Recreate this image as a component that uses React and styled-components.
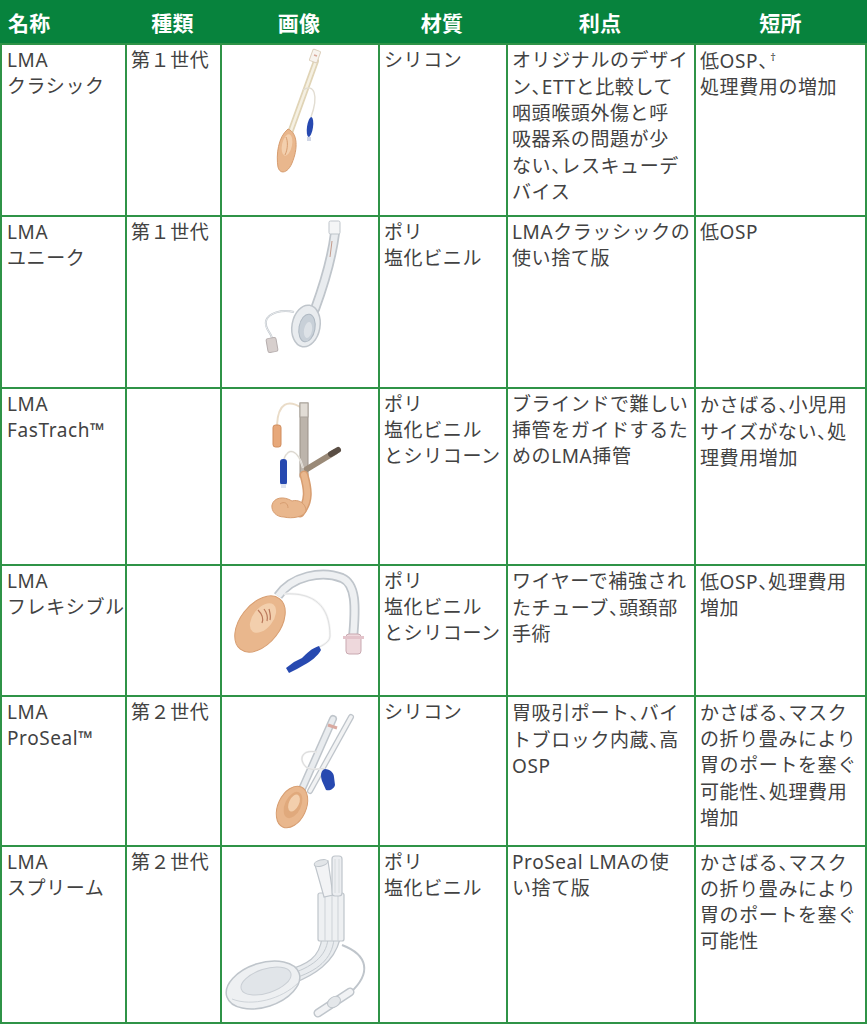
import React from 'react';
import styled, { createGlobalStyle } from 'styled-components';

const GlobalStyle = createGlobalStyle`
  html, body {
    margin: 0;
    padding: 0;
    background: #fff;
  }
  body {
    font-family: "Noto Sans", "Noto Sans CJK JP", sans-serif;
  }
`;

const COLS = [125, 95, 158, 128, 188, 173];

const Page = styled.div`
  width: 867px;
`;

const HeaderRow = styled.div`
  display: grid;
  grid-template-columns: ${COLS.map((c) => c + 'px').join(' ')};
  height: 43px;
  background: #07833d;
`;

const HeaderCell = styled.div`
  display: flex;
  align-items: center;
  justify-content: ${({ left }) => (left ? 'flex-start' : 'center')};
  padding-left: ${({ left }) => (left ? '8px' : '0')};
  color: #fff;
  font-family: "Noto Sans CJK JP", sans-serif;
  font-weight: 700;
  font-size: 21px;
  letter-spacing: 0.3px;
`;

const Body = styled.div`
  display: grid;
  grid-template-columns: 123px 93px 156px 126px 186px 169px;
  grid-template-rows: 170px 170px 175px 129px 148px 175px;
  gap: 2px;
  padding: 2px;
  background: #2f9347;
`;

const Cell = styled.div`
  background: #fff;
  padding: 2px 4px 0 ${({ first }) => (first ? '5px' : '4px')};
  font-size: 19px;
  line-height: 26px;
  letter-spacing: 0.6px;
  color: #424242;
  white-space: nowrap;
  overflow: hidden;
`;

const ImageCell = styled.div`
  background: #fff;
  overflow: hidden;
  svg {
    display: block;
  }
`;

const Comma = styled.span`
  font-family: "Noto Sans CJK JP", sans-serif;
  font-feature-settings: "halt";
`;

const Sup = styled.sup`
  font-size: 11px;
  line-height: 0;
  vertical-align: 7px;
  margin-left: 2px;
`;

const renderLine = (line) => {
  if (typeof line !== 'string') return line;
  const parts = line.split('、');
  return parts.map((p, i) => (
    <React.Fragment key={i}>
      {p}
      {i < parts.length - 1 && <Comma>、</Comma>}
    </React.Fragment>
  ));
};

const Lines = ({ lines }) =>
  lines.map((l, i) => (
    <React.Fragment key={i}>
      {renderLine(l)}
      {i < lines.length - 1 && <br />}
    </React.Fragment>
  ));

/* ---- device drawings ---- */

const PEACH = '#e9b78d';
const PEACH_EDGE = '#d79d70';
const PEACH_IN = '#f3cfad';
const BLUE = '#2749b0';
const CLEAR = '#e9ecef';
const CLEAR_EDGE = '#bfc5cb';

const Classic = () => (
  <svg width="156" height="170" viewBox="0 0 156 170">
    <path d="M94 16 L68 88" stroke="#e0d4b6" strokeWidth="6" strokeLinecap="round" />
    <path d="M94 16 L68 88" stroke="#f5f0e2" strokeWidth="2.5" strokeLinecap="round" />
    <rect x="89" y="5" width="8" height="12" rx="1" fill="#f7f3ee" stroke="#dccfbb" transform="rotate(20 93 11)" />
    <path d="M92 10 L95 11" stroke="#d9a89a" strokeWidth="1.5" />
    <path d="M81 45 C92 38, 97 50, 89 72" stroke="#e2ddd2" strokeWidth="1.4" fill="none" />
    <ellipse cx="88" cy="82" rx="3" ry="10" fill={BLUE} transform="rotate(8 88 82)" />
    <rect x="85" y="92" width="4" height="4" fill="#d0d6e6" />
    <path d="M66 84 C76 88, 76 104, 70 118 C66 128, 58 130, 56 122 C54 110, 56 92, 66 84 Z" fill={PEACH} stroke={PEACH_EDGE} strokeWidth="1" />
    <ellipse cx="65" cy="100" rx="5" ry="11" fill={PEACH_IN} transform="rotate(12 65 100)" />
    <path d="M64 92 C66 96, 66 104, 63 110" stroke={PEACH_EDGE} strokeWidth="1" fill="none" />
  </svg>
);

const Unique = () => (
  <svg width="156" height="170" viewBox="0 0 156 170">
    <path d="M113 16 C110 40, 104 62, 93 92" stroke={CLEAR_EDGE} strokeWidth="10" fill="none" strokeLinecap="round" />
    <path d="M113 16 C110 40, 104 62, 93 92" stroke={CLEAR} strokeWidth="6.5" fill="none" strokeLinecap="round" />
    <path d="M110 24 L108 40" stroke="#c49a8a" strokeWidth="1" />
    <rect x="107" y="4" width="11" height="13" rx="1.5" fill="#f4f5f6" stroke={CLEAR_EDGE} />
    <path d="M72 95 C60 92, 46 96, 44 104 C42 112, 50 116, 50 122" stroke={CLEAR_EDGE} strokeWidth="2" fill="none" />
    <path d="M72 95 C60 92, 46 96, 44 104 C42 112, 50 116, 50 122" stroke="#f3f4f5" strokeWidth="0.8" fill="none" />
    <rect x="45" y="121" width="10" height="14" rx="2" fill="#d7cfcd" stroke="#b6aeae" transform="rotate(-10 50 128)" />
    <ellipse cx="84" cy="109" rx="14" ry="21" fill={CLEAR} stroke={CLEAR_EDGE} strokeWidth="1.5" transform="rotate(10 84 109)" />
    <ellipse cx="85" cy="111" rx="8" ry="14" fill="#c8d0d8" stroke="#aeb8c2" transform="rotate(10 85 111)" />
    <ellipse cx="86" cy="113" rx="4" ry="8" fill="#dde2e7" transform="rotate(10 86 113)" />
  </svg>
);

const Fastrach = () => (
  <svg width="156" height="175" viewBox="0 0 156 175">
    <path d="M80 19 C66 10, 56 14, 55 36" stroke="#eadcc8" strokeWidth="2" fill="none" />
    <rect x="51" y="36" width="8" height="22" rx="2.5" fill="#e7a87a" stroke="#d08c5c" />
    <rect x="78" y="14" width="8" height="74" fill="#bcb4ab" stroke="#9a9188" strokeWidth="1" />
    <rect x="78" y="14" width="8" height="14" fill="#e1dcd5" stroke="#aaa39b" strokeWidth="1" />
    <path d="M85 80 L113 63" stroke="#9a8a78" strokeWidth="6" strokeLinecap="round" />
    <path d="M109 65 L116 61" stroke="#5a4e44" strokeWidth="6" strokeLinecap="round" />
    <path d="M81 79 C76 60, 66 58, 62 70" stroke="#efece6" strokeWidth="2" fill="none" />
    <path d="M81 79 C76 60, 66 58, 62 70" stroke="#c9c4bc" strokeWidth="0.6" fill="none" />
    <rect x="58" y="70" width="7" height="26" rx="3" fill={BLUE} />
    <rect x="59" y="95" width="5" height="4" fill="#dfe3ee" />
    <path d="M82 86 C86 100, 88 112, 78 124" stroke={PEACH_EDGE} strokeWidth="9" fill="none" strokeLinecap="round" />
    <path d="M82 86 C86 100, 88 112, 78 124" stroke={PEACH} strokeWidth="6" fill="none" strokeLinecap="round" />
    <path d="M50 116 C52 108, 62 107, 70 112 C76 110, 84 114, 84 122 C82 128, 70 130, 62 128 C54 128, 49 122, 50 116 Z" fill={PEACH} stroke={PEACH_EDGE} />
    <path d="M58 115 C62 112, 66 114, 66 119" stroke={PEACH_EDGE} strokeWidth="1" fill="none" />
  </svg>
);

const Flexible = () => (
  <svg width="156" height="129" viewBox="0 0 156 129">
    <path d="M56 30 C70 10, 100 4, 120 12 C134 18, 134 40, 131 72" stroke={CLEAR_EDGE} strokeWidth="10" fill="none" />
    <path d="M56 30 C70 10, 100 4, 120 12 C134 18, 134 40, 131 72" stroke="#eef0f2" strokeWidth="6.5" fill="none" />
    <rect x="124" y="68" width="15" height="20" rx="3" fill="#eed8dc" stroke="#c9a9b1" />
    <rect x="121" y="70" width="21" height="3" fill="#e3c3ca" />
    <path d="M62 28 C92 26, 108 40, 108 70 C108 76, 100 80, 95 82" stroke="#f4f4f4" strokeWidth="2.4" fill="none" />
    <path d="M62 28 C92 26, 108 40, 108 70 C108 76, 100 80, 95 82" stroke="#cfd0d2" strokeWidth="0.6" fill="none" />
    <path d="M97 80 C90 82, 84 88, 80 92 L72 96 L64 102 L67 107 L75 103 L82 99 C88 96, 96 90, 99 84 Z" fill={BLUE} />
    <ellipse cx="38" cy="58" rx="20" ry="32" fill={PEACH} stroke={PEACH_EDGE} transform="rotate(38 38 58)" />
    <ellipse cx="41" cy="52" rx="10" ry="17" fill={PEACH_IN} transform="rotate(38 41 52)" />
    <path d="M36 44 C40 48, 42 52, 40 57 M42 43 C45 47, 46 51, 45 55 M47 43 C48 47, 49 50, 48 54" stroke="#b9775a" strokeWidth="1.2" fill="none" />
  </svg>
);

const ProSeal = () => (
  <svg width="156" height="148" viewBox="0 0 156 148">
    <path d="M111 22 L80 92" stroke={CLEAR_EDGE} strokeWidth="8" strokeLinecap="round" />
    <path d="M111 22 L80 92" stroke={CLEAR} strokeWidth="5" strokeLinecap="round" />
    <path d="M129 20 L88 94" stroke={CLEAR_EDGE} strokeWidth="6" strokeLinecap="round" />
    <path d="M129 20 L88 94" stroke="#f2f3f4" strokeWidth="3.5" strokeLinecap="round" />
    <path d="M106 28 L115 31" stroke="#d9a9a0" strokeWidth="3" />
    <path d="M95 55 C80 52, 76 62, 84 70 C92 76, 102 68, 104 74" stroke="#eeeeee" strokeWidth="2" fill="none" />
    <path d="M95 55 C80 52, 76 62, 84 70 C92 76, 102 68, 104 74" stroke="#c9c9c9" strokeWidth="0.5" fill="none" />
    <path d="M103 72 C108 72, 112 76, 112 80 L113 88 C112 92, 108 94, 104 93 L100 84 C98 78, 99 73, 103 72 Z" fill={BLUE} />
    <ellipse cx="70" cy="110" rx="14" ry="22" fill={PEACH} stroke={PEACH_EDGE} transform="rotate(25 70 110)" />
    <ellipse cx="71" cy="108" rx="8" ry="14" fill="#e0a97c" transform="rotate(25 71 108)" />
    <ellipse cx="72" cy="106" rx="5" ry="9" fill={PEACH_IN} transform="rotate(25 72 106)" />
  </svg>
);

const Supreme = () => (
  <svg width="156" height="175" viewBox="0 0 156 175">
    <path d="M120 98 C146 108, 150 126, 128 146" stroke={CLEAR_EDGE} strokeWidth="2" fill="none" />
    <path d="M96 166 L128 145" stroke={CLEAR_EDGE} strokeWidth="9" strokeLinecap="round" />
    <path d="M96 166 L128 145" stroke="#f1f2f4" strokeWidth="6" strokeLinecap="round" />
    <ellipse cx="112" cy="155" rx="7" ry="5" fill="#e4e7ea" stroke={CLEAR_EDGE} transform="rotate(-33 112 155)" />
    <path d="M100 90 C98 110, 86 118, 62 124 L72 136 C92 128, 112 116, 118 92 Z" fill={CLEAR} stroke={CLEAR_EDGE} strokeWidth="1.2" />
    <path d="M106 92 C104 110, 90 120, 66 128 M112 92 C110 112, 96 124, 70 132" stroke="#c4cad0" strokeWidth="1" fill="none" />
    <rect x="96" y="46" width="26" height="48" rx="2" fill="#eef0f2" stroke={CLEAR_EDGE} strokeWidth="1.2" />
    <path d="M103 46 L103 94 M110 46 L110 94 M116 46 L116 94" stroke="#cdd2d7" strokeWidth="1" />
    <path d="M93 18 L106 14 L111 48 L102 50 Z" fill="#f2f3f5" stroke={CLEAR_EDGE} strokeWidth="1.2" />
    <ellipse cx="99" cy="16" rx="7" ry="3" fill="#e2e5e8" stroke={CLEAR_EDGE} transform="rotate(-15 99 16)" />
    <rect x="110" y="9" width="10" height="40" rx="3" fill="#eceef1" stroke={CLEAR_EDGE} strokeWidth="1.2" />
    <path d="M113 12 L113 46 M117 12 L117 46" stroke="#d3d7db" strokeWidth="0.8" />
    <ellipse cx="41" cy="138" rx="38" ry="22" fill="#eef0f2" stroke={CLEAR_EDGE} strokeWidth="1.5" transform="rotate(-18 41 138)" />
    <ellipse cx="44" cy="134" rx="26" ry="12" fill="#e1e5e9" stroke="#c9ced4" transform="rotate(-18 44 134)" />
    <path d="M10 152 C30 160, 60 152, 76 136" stroke="#cfd4d9" strokeWidth="1" fill="none" />
  </svg>
);

const rows = [
  {
    name: ['LMA', 'クラシック'],
    type: ['第１世代'],
    Img: Classic,
    material: ['シリコン'],
    pros: ['オリジナルのデザイ', 'ン、ETTと比較して', '咽頭喉頭外傷と呼', '吸器系の問題が少', 'ない、レスキューデ', 'バイス'],
    cons: [
      <React.Fragment key="a">
        低OSP<Comma>、</Comma>
        <Sup>†</Sup>
      </React.Fragment>,
      '処理費用の増加',
    ],
  },
  {
    name: ['LMA', 'ユニーク'],
    type: ['第１世代'],
    Img: Unique,
    material: ['ポリ', '塩化ビニル'],
    pros: ['LMAクラッシックの', '使い捨て版'],
    cons: ['低OSP'],
  },
  {
    name: ['LMA', 'FasTrach™'],
    type: [],
    Img: Fastrach,
    material: ['ポリ', '塩化ビニル', 'とシリコーン'],
    pros: ['ブラインドで難しい', '挿管をガイドするた', 'めのLMA挿管'],
    cons: ['かさばる、小児用', 'サイズがない、処', '理費用増加'],
  },
  {
    name: ['LMA', 'フレキシブル'],
    type: [],
    Img: Flexible,
    material: ['ポリ', '塩化ビニル', 'とシリコーン'],
    pros: ['ワイヤーで補強され', 'たチューブ、頭頚部', '手術'],
    cons: ['低OSP、処理費用', '増加'],
  },
  {
    name: ['LMA', 'ProSeal™'],
    type: ['第２世代'],
    Img: ProSeal,
    material: ['シリコン'],
    pros: ['胃吸引ポート、バイ', 'トブロック内蔵、高', 'OSP'],
    cons: ['かさばる、マスク', 'の折り畳みにより', '胃のポートを塞ぐ', '可能性、処理費用', '増加'],
  },
  {
    name: ['LMA', 'スプリーム'],
    type: ['第２世代'],
    Img: Supreme,
    material: ['ポリ', '塩化ビニル'],
    pros: ['ProSeal LMAの使', 'い捨て版'],
    cons: ['かさばる、マスク', 'の折り畳みにより', '胃のポートを塞ぐ', '可能性'],
  },
];

const headers = ['名称', '種類', '画像', '材質', '利点', '短所'];

export default function App() {
  return (
    <Page>
      <GlobalStyle />
      <HeaderRow>
        {headers.map((h, i) => (
          <HeaderCell key={h} left={i === 0}>
            {h}
          </HeaderCell>
        ))}
      </HeaderRow>
      <Body>
        {rows.map((r, i) => (
          <React.Fragment key={i}>
            <Cell first>
              <Lines lines={r.name} />
            </Cell>
            <Cell>
              <Lines lines={r.type} />
            </Cell>
            <ImageCell>
              <r.Img />
            </ImageCell>
            <Cell>
              <Lines lines={r.material} />
            </Cell>
            <Cell>
              <Lines lines={r.pros} />
            </Cell>
            <Cell>
              <Lines lines={r.cons} />
            </Cell>
          </React.Fragment>
        ))}
      </Body>
    </Page>
  );
}
